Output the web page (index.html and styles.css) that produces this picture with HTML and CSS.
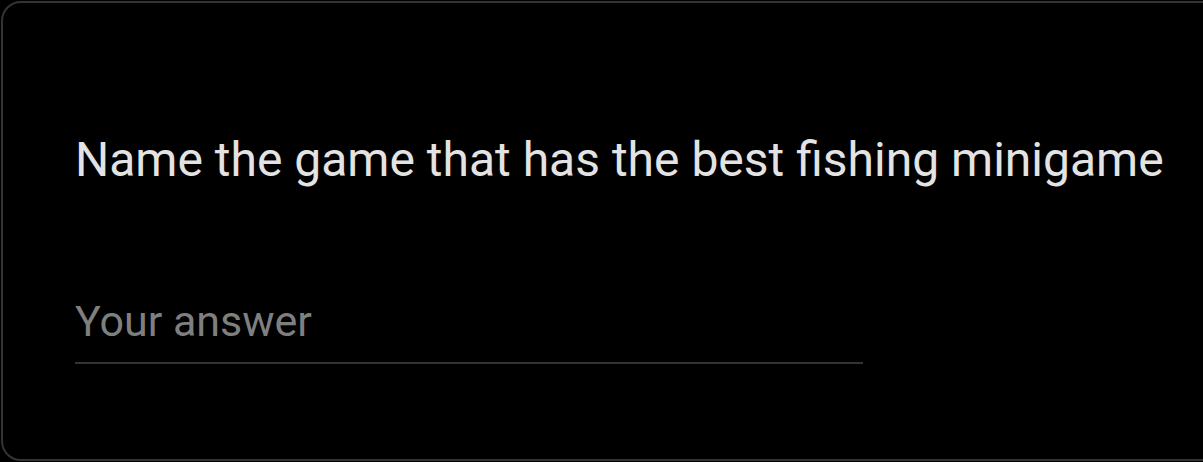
FILE: index.html
```html
<!DOCTYPE html>
<html>
<head>
<meta charset="utf-8">
<link rel="stylesheet" href="styles.css">
</head>
<body>
<div class="card">
  <div class="question">Name the game that has the best fishing minigame</div>
  <div class="answer">
    <div class="placeholder">Your answer</div>
  </div>
</div>
</body>
</html>
```
FILE: styles.css
```css
html, body {
  margin: 0;
  padding: 0;
  background: #000;
}
body {
  width: 1203px;
  height: 462px;
  overflow: hidden;
  font-family: Roboto, "Noto Sans", sans-serif;
}
.card {
  margin: 1px 0 0 1px;
  width: 1240px;
  height: 456px;
  border: 2px solid #333;
  border-radius: 20px;
  background: #000;
  padding: 0 0 0 72px;
  box-sizing: content-box;
  display: flex;
  flex-direction: column;
}
.question {
  margin-top: 129px;
  font-size: 48px;
  line-height: 56px;
  color: #e3e3e3;
  white-space: nowrap;
}
.answer {
  margin-top: 109px;
  width: 788px;
  border-bottom: 2px solid #333;
  padding-bottom: 17px;
}
.placeholder {
  font-size: 43px;
  line-height: 48px;
  color: #7f7f7f;
}
```
